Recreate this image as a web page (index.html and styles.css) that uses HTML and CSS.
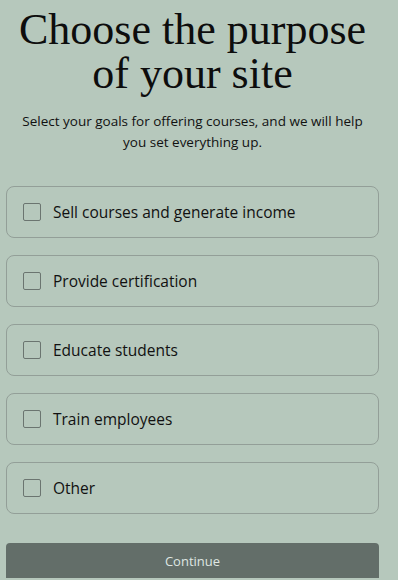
FILE: index.html
```html
<!DOCTYPE html>
<html lang="en">
<head>
    <meta charset="UTF-8">
    <meta name="viewport" content="width=device-width, initial-scale=1.0">
    <title>Choose the purpose of your site</title>
    <link rel="stylesheet" href="styles.css">
</head>
<body>

    <div class="page">
        <h1 class="title">Choose the purpose of your site</h1>
        <p class="subtitle">Select your goals for offering courses, and we will help you set everything up.</p>

        <form class="goals">
            <label class="goal">
                <input type="checkbox" name="goal" value="sell">
                <span class="box"></span>
                <span class="goal-text">Sell courses and generate income</span>
            </label>
            <label class="goal">
                <input type="checkbox" name="goal" value="certify">
                <span class="box"></span>
                <span class="goal-text">Provide certification</span>
            </label>
            <label class="goal">
                <input type="checkbox" name="goal" value="educate">
                <span class="box"></span>
                <span class="goal-text">Educate students</span>
            </label>
            <label class="goal">
                <input type="checkbox" name="goal" value="train">
                <span class="box"></span>
                <span class="goal-text">Train employees</span>
            </label>
            <label class="goal">
                <input type="checkbox" name="goal" value="other">
                <span class="box"></span>
                <span class="goal-text">Other</span>
            </label>

            <button type="button" class="continue-btn">Continue</button>
        </form>
    </div>

</body>
</html>
```

FILE: styles.css
```css
body {
    margin: 0;
    padding: 0;
    background-color: #b6c8bc;
    font-family: "Open Sans", "Noto Sans", sans-serif;
    color: #111;
}

.page {
    width: 373px;
    padding: 8px 19px 0 6px;
}

.title {
    margin: 0;
    font-family: "Liberation Serif", serif;
    font-weight: normal;
    font-size: 44px;
    line-height: 44px;
    text-align: center;
    color: #0d0d0d;
}

.subtitle {
    margin: 15px 6px 0;
    font-size: 13.5px;
    line-height: 21px;
    text-align: center;
}

.goals {
    display: flex;
    flex-direction: column;
    gap: 17px;
    margin-top: 33px;
}

.goal {
    display: flex;
    align-items: center;
    gap: 12px;
    height: 50px;
    padding: 0 16px;
    border: 1px solid #939f98;
    border-radius: 8px;
    cursor: pointer;
}

.goal input {
    display: none;
}

.box {
    width: 16px;
    height: 16px;
    border: 1px solid #6b7570;
    border-radius: 2px;
}

.goal input:checked + .box {
    background: #636e69;
}

.goal-text {
    font-size: 15.5px;
}

.continue-btn {
    margin-top: 12px;
    height: 35px;
    border: none;
    border-radius: 4px 4px 0 0;
    background-color: #636e69;
    color: #dfe6e2;
    font-family: "Open Sans", "Noto Sans", sans-serif;
    font-size: 13px;
    cursor: pointer;
}
```
